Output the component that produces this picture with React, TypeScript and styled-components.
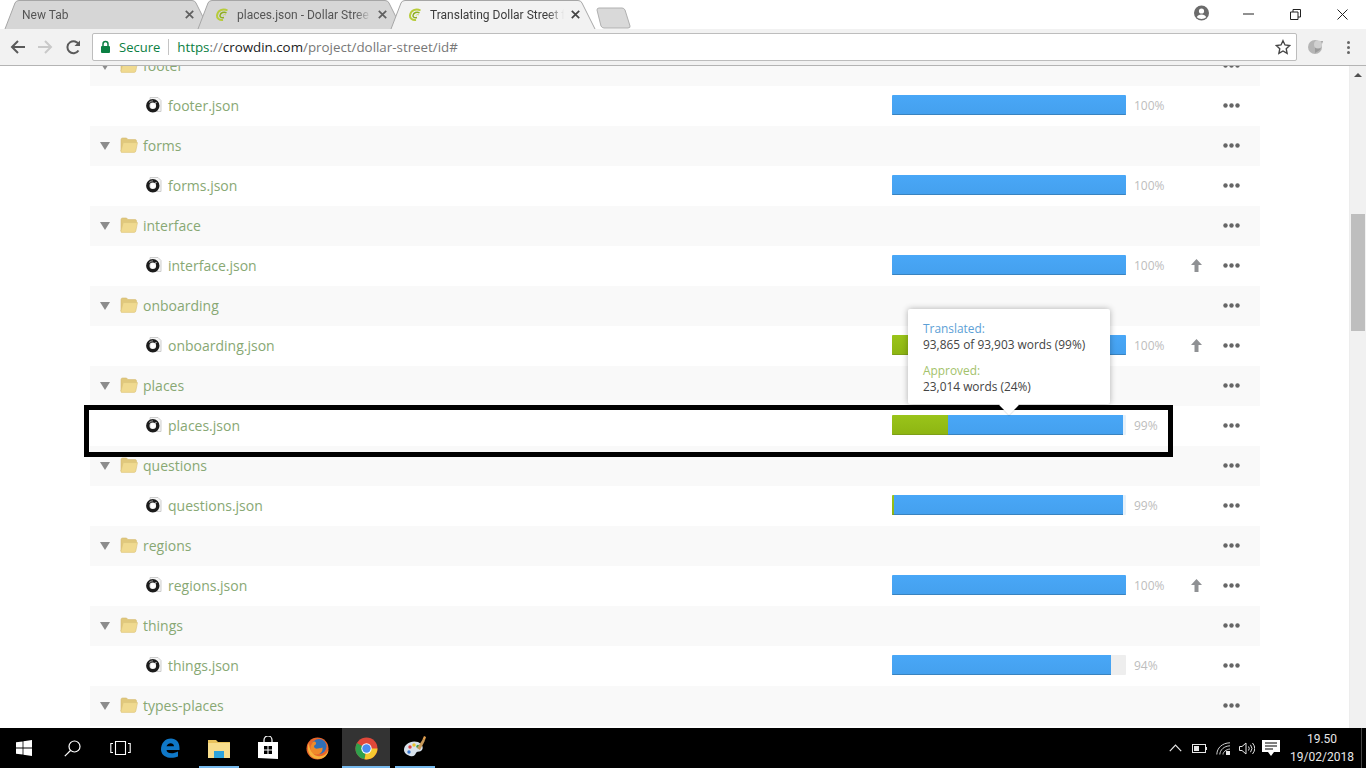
import React from "react";
import styled, { createGlobalStyle } from "styled-components";

const Global = createGlobalStyle`
  html, body { margin: 0; padding: 0; height: 100%; overflow: hidden; background: #fff; }
  * { box-sizing: border-box; }
`;

const Screen = styled.div`
  width: 1366px; height: 768px; display: flex; flex-direction: column; overflow: hidden;
  font-family: "Open Sans", "Liberation Sans", sans-serif; background: #fff;
`;

/* ---------- browser chrome ---------- */
const TabStrip = styled.div`
  height: 29px; flex: none; display: flex; align-items: flex-end; padding-left: 4px; background: #fff; position: relative;
`;
const Tab = styled.div<{ $active?: boolean }>`
  position: relative; width: 206px; height: 29px; margin-right: -13px; flex: none;
  display: flex; align-items: center; padding: 0 16px 0 18px; gap: 7px;
  z-index: ${(p) => (p.$active ? 2 : 1)};
  color: ${(p) => (p.$active ? "#3c3c3c" : "#555")};
  font-family: Roboto, "Open Sans", sans-serif;
  font-size: 12px;
`;
const TabShape = styled.svg`
  position: absolute; inset: 0; width: 100%; height: 100%;
`;
const TabTitle = styled.span`
  position: relative; flex: 1; white-space: nowrap; overflow: hidden;
  -webkit-mask-image: linear-gradient(to right, #000 88%, transparent 100%);
  mask-image: linear-gradient(to right, #000 88%, transparent 100%);
`;
const TabIconSlot = styled.span`
  position: relative; display: flex; flex: none;
`;
const NewTabBtn = styled.svg`
  width: 36px; height: 22px; margin: 0 0 -1px 13px; flex: none; position: relative; top: -1px;
`;
const Toolbar = styled.div`
  height: 37px; flex: none; display: flex; align-items: center; background: #f2f2f2;
  border-bottom: 1px solid #b4b4b4; padding: 0 10px 0 10px; position: relative; z-index: 3;
`;
const NavBtns = styled.div`
  display: flex; align-items: center; gap: 13px; width: 82px; flex: none;
`;
const Omnibox = styled.div`
  width: 1205px; height: 28px; background: #fff; border: 1px solid #bdbdbd; border-radius: 2px;
  display: flex; align-items: center; padding: 0 5px 0 7px; flex: none; font-size: 13px;
`;
const SecureText = styled.span`
  color: #0b8043; margin-left: 8px;
`;
const Divider = styled.span`
  width: 1px; height: 16px; background: #c4c4c4; margin: 0 8px;
`;
const Url = styled.span`
  color: #777; flex: 1; font-size: 13.35px;
  em { font-style: normal; color: #0b8043; }
  b { font-weight: 400; color: #222; }
`;
const ToolbarEnd = styled.div`
  display: flex; align-items: center; margin-left: 10px; gap: 22px;
`;
const WindowControls = styled.div`
  position: absolute; top: 0; right: 0; height: 28px; display: flex; align-items: center; z-index: 4;
`;
const WinBtn = styled.div`
  width: 47px; height: 28px; display: flex; align-items: center; justify-content: center;
`;
const ProfileSlot = styled.div`
  position: absolute; top: 5px; left: 1193px; display: flex;
`;

/* ---------- page ---------- */
const Page = styled.div`
  position: relative; flex: 1; min-height: 0; display: flex; overflow: hidden;
`;
const Content = styled.div`
  flex: 1; padding-left: 90px; padding-right: 106px; margin-top: -20px;
`;
const Row = styled.div<{ $folder?: boolean }>`
  height: 40px; display: flex; align-items: center; position: relative;
  background: ${(p) => (p.$folder ? "#f9f9f9" : "#fff")};
  padding: 0 0 2px ${(p) => (p.$folder ? "10px" : "56px")};
  color: #88a874; font-size: 14px;
`;
const Caret = styled.span`
  width: 0; height: 0; border-left: 5px solid transparent; border-right: 5px solid transparent;
  border-top: 8px solid #8c8c8c; margin-right: 10px; flex: none; position: relative; top: 1px;
`;
const FolderName = styled.span`
  margin-left: 5px;
`;
const FileName = styled.span`
  margin-left: 6px;
`;
const Right = styled.div`
  margin-left: auto; display: flex; align-items: center; height: 100%;
`;
const BarTrack = styled.div`
  width: 234px; height: 20px; background: #e6f1fa; display: flex; overflow: hidden; border-radius: 1px;
`;
const LowTrack = styled(BarTrack)`
  background: #eeeeee;
`;
const GreenSeg = styled.div`
  height: 100%; background: linear-gradient(#9ac41a, #8db512); box-shadow: inset 0 -1px 0 #7d9f18; flex: none;
`;
const BlueSeg = styled.div`
  height: 100%; background: linear-gradient(#49a7f7, #44a0ee); box-shadow: inset 0 -1px 0 #3a83bf; flex: none;
`;
const Pct = styled.span`
  width: 61px; padding-left: 8px; font-size: 12px; color: #bdbdbd; flex: none;
`;
const ArrowSlot = styled.span`
  width: 18px; margin-right: 18px; display: flex; justify-content: center; flex: none;
`;
const Dots = styled.svg`
  width: 17px; height: 5px; margin-right: 20px; flex: none;
`;
const Scrollbar = styled.div`
  position: absolute; right: 0; top: 0; bottom: 0; width: 17px; background: #f1f1f1; border-left: 1px solid #ededed;
`;
const ScrollArrow = styled.span`
  position: absolute; top: 7px; left: 4px; width: 0; height: 0;
  border-left: 4px solid transparent; border-right: 4px solid transparent; border-bottom: 4px solid #505050;
`;
const ScrollThumb = styled.div`
  position: absolute; top: 148px; left: 1px; width: 14px; height: 117px; background: #bebebe;
`;
const Highlight = styled.div`
  position: absolute; left: 84px; top: 339px; width: 1089px; height: 52px; border: 5px solid #000; pointer-events: none;
`;
const Tooltip = styled.div`
  position: absolute; left: 908px; top: 243px; width: 202px; height: 95px; background: #fff; border-radius: 2px;
  box-shadow: 0 0 6px rgba(0,0,0,.3); padding: 11px 15px; font-size: 11.9px; line-height: 16px; color: #444; z-index: 5;
  &::after {
    content: ""; position: absolute; left: 94px; bottom: -8px; width: 14px; height: 14px; background: #fff;
    transform: rotate(45deg); box-shadow: 1px 1px 1px rgba(0,0,0,.1);
  }
`;
const TipLabel = styled.div<{ $green?: boolean }>`
  color: ${(p) => (p.$green ? "#a3c26b" : "#5d9fd6")};
`;
const TipBlock = styled.div`
  margin-bottom: 10px;
`;

/* ---------- taskbar ---------- */
const Taskbar = styled.div`
  height: 40px; flex: none; background: #000; display: flex; align-items: center; position: relative; color: #fff;
`;
const TaskBtn = styled.div<{ $active?: boolean; $open?: boolean }>`
  position: relative; width: 48px; height: 40px; flex: none; display: flex; align-items: center; justify-content: center;
  background: ${(p) => (p.$active ? "#333" : "transparent")};
  &::after {
    content: ""; position: absolute; bottom: 0; height: 2px;
    left: ${(p) => (p.$active ? 0 : 4)}px; right: ${(p) => (p.$active ? 0 : 4)}px;
    background: ${(p) => (p.$open ? "#76b9ed" : "transparent")};
  }
`;
const TaskGroup = styled.div`
  display: flex; gap: 1px; padding-left: 2px;
`;
const Tray = styled.div`
  margin-left: auto; display: flex; align-items: center; height: 100%;
`;
const TrayIcon = styled.div`
  width: 24px; display: flex; justify-content: center; align-items: center;
`;
const Clock = styled.div`
  width: 78px; text-align: center; font-family: Roboto, sans-serif; font-size: 12px; line-height: 18px; color: #e8e8e8;
`;
const DesktopEdge = styled.div`
  width: 1px; height: 40px; background: #444; margin-right: 4px;
`;

/* ---------- drawings ---------- */
const CrowdinFav = () => (
  <svg width="15" height="15" viewBox="0 0 15 15" fill="none">
    <path d="M12.500 3.500C8 1 2.500 3.500 2 8.500c-.3 3 2.500 5 6 4.500" stroke="#b7cc3a" strokeWidth="2" />
    <path d="M11.500 5.800C9 4.500 5.500 5.500 5 8.500c-.2 1.800 1.500 2.500 4 2" stroke="#8fae22" strokeWidth="1.500" />
    <path d="M11 8c-1-.7-2.500-.5-3 .5" stroke="#c8d860" strokeWidth="1" />
  </svg>
);
const CloseX = ({ c = "#5f5f5f" }: { c?: string }) => (
  <svg width="9" height="9" viewBox="0 0 9 9"><path d="M.8.8l7.400 7.400M8.200.8L.8 8.200" stroke={c} strokeWidth="1.700" /></svg>
);
const TabBg = ({ active }: { active?: boolean }) => (
  <TabShape viewBox="0 0 206 29" preserveAspectRatio="none">
    <path d="M1 29 L11 3 Q12 .5 15 .5 L188 .5 Q191 .5 192 3 L205 29" fill={active ? "#f2f2f2" : "#d6d6d6"} stroke="#a6a6a6" strokeWidth="1" />
  </TabShape>
);
const Folder = () => (
  <svg width="18" height="16" viewBox="0 0 18 16" style={{ flex: "none" }}>
    <path d="M1 14V2.500Q1 1 2.500 1h4L8 2.600h7Q16.500 2.600 16.500 4v2H4z" fill="#e0c87c" stroke="#d5bb72" strokeWidth=".6" />
    <path d="M3.200 5.600H17.500L15.800 14q-.3 1.400-1.700 1.400H1.500Q.7 15.400 1 14z" fill="#f0da90" stroke="#dcc57a" strokeWidth=".6" />
  </svg>
);
const FileIcon = () => (
  <svg width="16" height="16" viewBox="0 0 16 16" style={{ flex: "none" }}>
    <path d="M4 .5h8l3 3V14.500H4z" fill="#f6f6f6" stroke="#c4c4c4" strokeWidth=".8" />
    <circle cx="6.800" cy="8.800" r="5" fill="none" stroke="#1b1b1b" strokeWidth="3.400" />
    <path d="M3.200 5.600A5 5 0 0 1 7 3.900" fill="none" stroke="#888" strokeWidth="1.200" />
    <circle cx="6.800" cy="8.800" r="2.200" fill="#fff" />
    <path d="M8 7.500L10.500 5" stroke="#e8e8e8" strokeWidth="1" />
  </svg>
);
const UpArrow = () => (
  <svg width="11" height="13" viewBox="0 0 11 13"><path d="M5.500 0L11 6H7.500v7h-4V6H0z" fill="#8f9194" /></svg>
);
const DotsIcon = () => (
  <Dots viewBox="0 0 17 5">
    <circle cx="2.500" cy="2.500" r="2.200" fill="#666" />
    <circle cx="8.500" cy="2.500" r="2.200" fill="#666" />
    <circle cx="14.500" cy="2.500" r="2.200" fill="#666" />
  </Dots>
);

type Item = { name: string; file: string; pct: number; approved?: number; up?: boolean };
const items: Item[] = [
  { name: "footer", file: "footer.json", pct: 100 },
  { name: "forms", file: "forms.json", pct: 100 },
  { name: "interface", file: "interface.json", pct: 100, up: true },
  { name: "onboarding", file: "onboarding.json", pct: 100, approved: 24, up: true },
  { name: "places", file: "places.json", pct: 99, approved: 24 },
  { name: "questions", file: "questions.json", pct: 99, approved: 1 },
  { name: "regions", file: "regions.json", pct: 100, up: true },
  { name: "things", file: "things.json", pct: 94 },
];

const BAR_WIDTH = 234;

const Progress = ({ pct, approved = 0 }: { pct: number; approved?: number }) => {
  const Track = pct < 95 ? LowTrack : BarTrack;
  const green = Math.floor((BAR_WIDTH * approved) / 100);
  const filled = Math.floor((BAR_WIDTH * pct) / 100);
  return (
    <Track>
      {approved > 0 && <GreenSeg style={{ width: green }} />}
      <BlueSeg style={{ width: filled - green }} />
    </Track>
  );
};

export default function App() {
  return (
    <Screen>
      <Global />
      <TabStrip>
        <Tab>
          <TabBg />
          <TabTitle>New Tab</TabTitle>
          <TabIconSlot><CloseX /></TabIconSlot>
        </Tab>
        <Tab>
          <TabBg />
          <TabIconSlot><CrowdinFav /></TabIconSlot>
          <TabTitle>places.json - Dollar Stree</TabTitle>
          <TabIconSlot><CloseX /></TabIconSlot>
        </Tab>
        <Tab $active>
          <TabBg active />
          <TabIconSlot><CrowdinFav /></TabIconSlot>
          <TabTitle>Translating Dollar Street f</TabTitle>
          <TabIconSlot><CloseX c="#444" /></TabIconSlot>
        </Tab>
        <NewTabBtn viewBox="0 0 36 22">
          <path d="M1 3 Q1 1 3 1H26Q28 1 29 3L34 19Q34.500 21 32 21H8Q6 21 5 19z" fill="#d9d9d9" stroke="#b0b0b0" />
        </NewTabBtn>
        <ProfileSlot>
          <svg width="17" height="16" viewBox="0 0 16 16">
            <circle cx="8" cy="8" r="7.500" fill="#6b6b6b" />
            <circle cx="8" cy="6" r="2.600" fill="#fff" />
            <path d="M3.300 12.200Q4.500 9.600 8 9.600t4.700 2.600Q11 14 8 14t-4.700-1.800z" fill="#fff" />
          </svg>
        </ProfileSlot>
        <WindowControls>
          <WinBtn><svg width="11" height="2" viewBox="0 0 11 2"><path d="M0 1h11" stroke="#222" /></svg></WinBtn>
          <WinBtn><svg width="11" height="11" viewBox="0 0 11 11" fill="none" stroke="#222"><path d="M.5 3h7.500v7.500H.5zM3 3V.5h7.500V8H8" /></svg></WinBtn>
          <WinBtn><svg width="11" height="11" viewBox="0 0 11 11"><path d="M.5.5l10 10M10.500.5l-10 10" stroke="#222" /></svg></WinBtn>
        </WindowControls>
      </TabStrip>
      <Toolbar>
        <NavBtns>
          <svg width="15" height="14" viewBox="0 0 15 14" fill="none" stroke="#5a5a5a" strokeWidth="2"><path d="M15 7H2M8 1L2 7l6 6" /></svg>
          <svg width="15" height="14" viewBox="0 0 15 14" fill="none" stroke="#c9c9c9" strokeWidth="2"><path d="M0 7h13M7 1l6 6-6 6" /></svg>
          <svg width="15" height="15" viewBox="0 0 15 15" fill="none" stroke="#5a5a5a" strokeWidth="2"><path d="M12.500 10.500A6 6 0 1 1 13 5" /><path d="M14 .5V6H8.500z" fill="#5a5a5a" stroke="none" /></svg>
        </NavBtns>
        <Omnibox>
          <svg width="11" height="14" viewBox="0 0 11 14"><path d="M3 6V4a2.500 2.500 0 0 1 5 0v2" fill="none" stroke="#0b8043" strokeWidth="1.500" /><rect x="1" y="6" width="9" height="7" rx="1" fill="#0b8043" /></svg>
          <SecureText>Secure</SecureText>
          <Divider />
          <Url><em>https</em>://<b>crowdin.com</b>/project/dollar-street/id#</Url>
          <svg width="16" height="16" viewBox="0 0 24 24" fill="none" stroke="#444" strokeWidth="2"><path d="M12 2.500l3 6.500 7 .8-5.200 4.700 1.400 7L12 17.900 5.800 21.500l1.400-7L2 9.800 9 9z" /></svg>
        </Omnibox>
        <ToolbarEnd>
          <svg width="18" height="16" viewBox="0 0 18 16"><circle cx="8" cy="8" r="7" fill="#b5b5b5" /><path d="M8 3l8-1-3 9-5 3z" fill="#9a9a9a" /><circle cx="11" cy="5.500" r="4" fill="#d0d0d0" /></svg>
          <svg width="3" height="13" viewBox="0 0 3 13"><circle cx="1.500" cy="1.500" r="1.500" fill="#666" /><circle cx="1.500" cy="6.500" r="1.500" fill="#666" /><circle cx="1.500" cy="11.500" r="1.500" fill="#666" /></svg>
        </ToolbarEnd>
      </Toolbar>
      <Page>
        <Content>
          {items.map((it) => (
            <React.Fragment key={it.name}>
              <Row $folder>
                <Caret />
                <Folder />
                <FolderName>{it.name}</FolderName>
                <Right><DotsIcon /></Right>
              </Row>
              <Row>
                <FileIcon />
                <FileName>{it.file}</FileName>
                <Right>
                  <Progress pct={it.pct} approved={it.approved} />
                  <Pct>{it.pct}%</Pct>
                  <ArrowSlot>{it.up && <UpArrow />}</ArrowSlot>
                  <DotsIcon />
                </Right>
              </Row>
            </React.Fragment>
          ))}
          <Row $folder>
            <Caret />
            <Folder />
            <FolderName>types-places</FolderName>
            <Right><DotsIcon /></Right>
          </Row>
        </Content>
        <Highlight />
        <Tooltip>
          <TipBlock>
            <TipLabel>Translated:</TipLabel>
            93,865 of 93,903 words (99%)
          </TipBlock>
          <div>
            <TipLabel $green>Approved:</TipLabel>
            23,014 words (24%)
          </div>
        </Tooltip>
        <Scrollbar>
          <ScrollArrow />
          <ScrollThumb />
        </Scrollbar>
      </Page>
      <Taskbar>
        <TaskBtn>
          <svg width="16" height="16" viewBox="0 0 16 16" fill="#fff"><path d="M0 2.300l6.600-.9v6.200H0zM7.400 1.300L16 0v7.600H7.400zM0 8.400h6.600v6.200L0 13.700zM7.400 8.400H16V16l-8.600-1.300z" /></svg>
        </TaskBtn>
        <TaskBtn>
          <svg width="17" height="17" viewBox="0 0 17 17" fill="none" stroke="#fff" strokeWidth="1.200"><circle cx="10.500" cy="6.500" r="5.500" /><path d="M6.500 10.500L.8 16.200" /></svg>
        </TaskBtn>
        <TaskBtn>
          <svg width="21" height="14" viewBox="0 0 21 14" fill="none" stroke="#fff" strokeWidth="1.100"><path d="M5.500.5h10v13h-10zM3 2.500H.8v9H3M18 2.500h2.200v9H18" /></svg>
        </TaskBtn>
        <TaskGroup>
          <TaskBtn>
            <svg width="20" height="21" viewBox="0 0 20 21"><path d="M1 12C1 5 5 .5 11 .5c5 0 8.500 3.500 8.500 9.500v2H6.500c.3 3.500 6 4.500 11.500 1.500v5c-6 2.500-16 2-17-6.500zM6.500 8.300h7.500C14 4.500 8 4 6.500 8.300z" fill="#0f78c8" /></svg>
          </TaskBtn>
          <TaskBtn $open>
            <svg width="22" height="20" viewBox="0 0 22 20"><path d="M0 2h8l2 2h12v3H0z" fill="#e8c25c" /><path d="M0 5h22v15H0z" fill="#f7dd8c" /><path d="M6 13h10v7H6z" fill="#2da3dc" /></svg>
          </TaskBtn>
          <TaskBtn>
            <svg width="22" height="24" viewBox="0 0 22 24"><path d="M7 6V4a4 4 0 0 1 8 0v2" fill="none" stroke="#fff" strokeWidth="1.200" /><path d="M1 6h20v17L1 22z" fill="#fff" /><path d="M7 10h3.500v3.500H7zM11.500 10H15v3.500h-3.500zM7 14.500h3.500V18H7zM11.500 14.500H15V18h-3.500z" fill="#000" /></svg>
          </TaskBtn>
          <TaskBtn>
            <svg width="23" height="23" viewBox="0 0 23 23">
              <circle cx="11.500" cy="11.500" r="11" fill="#e8652a" />
              <circle cx="13" cy="9.500" r="7.500" fill="#2f6fb8" />
              <path d="M7 5c2-1 3 0 3 1.500s-2 1.500-2 3 2 2.500 4 2 2.500 0 4.500-1c.5 4-2 7-6 7S4 14 4.500 10C5 8 6 6 7 5z" fill="#ef8a2a" />
              <path d="M3 6C0 12 3 22 12 22c6 0 10-4 10.500-9-2 4.500-6 7-11 6S3 12 3 6z" fill="#f6b13a" />
            </svg>
          </TaskBtn>
          <TaskBtn $active $open>
            <svg width="23" height="23" viewBox="0 0 24 24">
              <circle cx="12" cy="12" r="11.500" fill="#e0483a" />
              <path d="M12 12L2 6.200A11.500 11.500 0 0 0 10 23.300z" fill="#2fa04c" />
              <path d="M12 12h11.400A11.500 11.500 0 0 1 10 23.300z" fill="#f7c92f" />
              <circle cx="12" cy="12" r="5.400" fill="#fff" />
              <circle cx="12" cy="12" r="4.400" fill="#4a8cf0" />
            </svg>
          </TaskBtn>
          <TaskBtn $open>
            <svg width="24" height="24" viewBox="0 0 24 24"><path d="M1 14C1 8 8 4 15 6c5 2 6 7 3 9-2 1-4 0-5 2s-2 4-6 3c-3-1-6-3-6-6z" fill="#d8e2ec" /><circle cx="7" cy="11" r="1.700" fill="#d44" /><circle cx="11" cy="9" r="1.700" fill="#e9c430" /><circle cx="15" cy="10.500" r="1.700" fill="#3b9c4f" /><circle cx="6" cy="16" r="1.700" fill="#3a78d0" /><path d="M14 12L20 3l2 1.500L17 14z" fill="#c89a5a" /><path d="M19.500 3.500L21 0l2 1-1 3z" fill="#e2a050" /></svg>
          </TaskBtn>
        </TaskGroup>
        <Tray>
          <TrayIcon><svg width="13" height="8" viewBox="0 0 13 8" fill="none" stroke="#e6e6e6" strokeWidth="1.200"><path d="M.8 7.200l5.700-6 5.700 6" /></svg></TrayIcon>
          <TrayIcon><svg width="15" height="9" viewBox="0 0 15 9"><rect x=".5" y=".5" width="13" height="8" fill="none" stroke="#e6e6e6" /><rect x="2" y="2" width="5" height="5" fill="#e6e6e6" /><rect x="14" y="3" width="1" height="3" fill="#e6e6e6" /></svg></TrayIcon>
          <TrayIcon><svg width="15" height="13" viewBox="0 0 15 13" fill="none" stroke="#cfcfcf"><path d="M.8 12.500C1 6 6 1 14 .8M3.800 12.500C4 8 8 4 14 3.800M7 12.500C7 10 10 7.500 14 7" /><rect x="10" y="9" width="4" height="4" fill="#e6e6e6" stroke="none" /></svg></TrayIcon>
          <TrayIcon><svg width="16" height="13" viewBox="0 0 16 13" fill="none" stroke="#e6e6e6"><path d="M.5 4.500h2.500L7 1v11L3 8.500H.5zM9.500 4.500q1.500 2 0 4M11.500 2.800q3 3.700 0 7.400M13.500 1q4.500 5.500 0 11" /></svg></TrayIcon>
          <TrayIcon><svg width="18" height="16" viewBox="0 0 18 16"><path d="M0 0h18v12h-6l-3 4-3-4H0z" fill="#fff" /><path d="M3 3h12M3 6h12M3 9h8" stroke="#000" /></svg></TrayIcon>
          <Clock>19.50<br />19/02/2018</Clock>
          <DesktopEdge />
        </Tray>
      </Taskbar>
    </Screen>
  );
}
